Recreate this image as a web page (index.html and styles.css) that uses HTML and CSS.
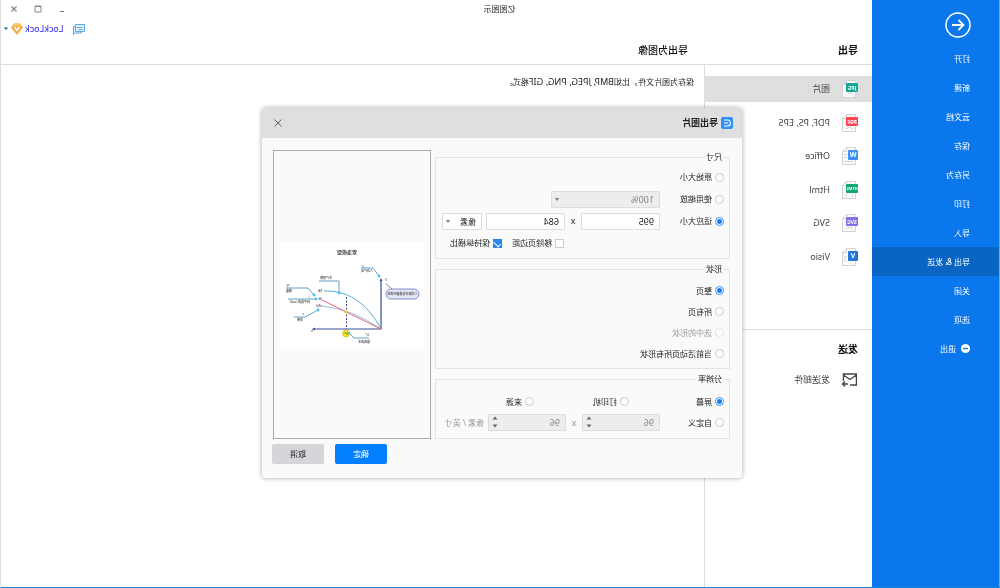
FILE: index.html
```html
<!DOCTYPE html>
<html lang="zh-CN">
<head>
<meta charset="utf-8">
<title>亿图图示</title>
<link rel="stylesheet" href="styles.css">
</head>
<body>
<div class="window">
  <nav class="sidebar">
    <button class="back" type="button" aria-label="返回">
      <svg width="26" height="26" viewBox="0 0 26 26" fill="none" stroke="#fff" stroke-width="1.5"><circle cx="13" cy="13" r="12"/><path d="M19 13H8M12.500 8 7.500 13l5 5" stroke-width="1.800"/></svg>
    </button>
    <a class="nav-item" href="#">打开</a>
    <a class="nav-item" href="#">新建</a>
    <a class="nav-item" href="#">云文档</a>
    <a class="nav-item" href="#">保存</a>
    <a class="nav-item" href="#">另存为</a>
    <a class="nav-item" href="#">打印</a>
    <a class="nav-item" href="#">导入</a>
    <a class="nav-item active" href="#"><span>导出 <span class="latin">&amp;</span> 发送</span></a>
    <a class="nav-item" href="#">关闭</a>
    <a class="nav-item" href="#">选项</a>
    <a class="nav-item" href="#"><svg width="9" height="9" viewBox="0 0 9 9"><circle cx="4.500" cy="4.500" r="4.500" fill="#fff"/><path d="M2 4.500h5" stroke="#0a78ec" stroke-width="1.400"/></svg>退出</a>
  </nav>

  <div class="workspace">
    <header class="top">
      <div class="title-bar">
        <span class="app-title">亿图图示</span>
        <div class="controls">
          <button type="button" aria-label="最小化"><svg width="8" height="8" viewBox="0 0 8 8"><path d="M2 6.500h4" stroke="#777"/></svg></button>
          <button type="button" aria-label="最大化"><svg width="8" height="8" viewBox="0 0 8 8"><path d="M1 1h6v6H1zM1 1.500h6" fill="none" stroke="#888"/></svg></button>
          <button type="button" aria-label="关闭"><svg width="8" height="8" viewBox="0 0 8 8"><path d="M1.500 1.500l5 5M6.500 1.500l-5 5" stroke="#888" stroke-width="1.300"/></svg></button>
        </div>
      </div>
      <div class="account">
        <svg width="12" height="11" viewBox="0 0 12 11" fill="#e2f1fd" stroke="#58a8ea"><path d="M3.500 2.500h8v8l-2-1.500h-6z"/><path d="M.500.500h9v7h-9z"/><path d="M3 3.500h5M2.500 5.500h4"/></svg>
        <a class="user" href="#">LockLock</a>
        <svg width="12" height="12" viewBox="0 0 12 12"><path d="M3 .500h6L12 4.500 6 12 0 4.500z" fill="#f5ac3c"/><path d="M3 .500h6L10 3H2z" fill="#fbc566"/><path d="M3.500 4 6 7.500 8.500 4" fill="none" stroke="#fff" stroke-width="1.500"/></svg>
        <svg width="6" height="4" viewBox="0 0 6 4"><path d="M1 .500h4L3 3z" fill="#1762b5"/></svg>
      </div>
      <div class="headings">
        <h2>导出</h2>
        <h1>导出为图像</h1>
      </div>
    </header>

    <div class="content">
      <aside class="pane">
        <div class="formats">
          <a class="format selected" href="#"><svg width="17" height="18" viewBox="0 0 17 18"><path class="page" d="M2.500.500h9l4 4v13h-13zM11.500.500v4h4M5 15l3-3 2 2"/><rect y="3" width="12" height="9" rx="1" fill="#14a897"/><text class="tag" x="6" y="9.500">JPG</text></svg>图片</a>
          <a class="format" href="#"><svg width="17" height="18" viewBox="0 0 17 18"><path class="page" d="M2.500.500h9l4 4v13h-13zM11.500.500v4h4M5 15l4-2 3 2"/><rect y="3" width="12" height="9" rx="1" fill="#fb4754"/><text class="tag" x="6" y="9.500">PDF</text></svg>PDF, PS, EPS</a>
          <a class="format" href="#"><svg width="17" height="18" viewBox="0 0 17 18"><path class="page" d="M2.500.500h9l4 4v13h-13zM11.500.500v4h4M11 7.500h3M11 10.500h3M5 14.500h9"/><rect y="3" width="10" height="10" rx="1" fill="#3c92f8"/><text class="tag big" x="5" y="10">W</text></svg>Office</a>
          <a class="format" href="#"><svg width="17" height="18" viewBox="0 0 17 18"><path class="page" d="M2.500.500h9l4 4v13h-13zM11.500.500v4h4M6 13l-1 1.500 1 1.500M11 13l1 1.500-1 1.500"/><rect y="3" width="12" height="9" rx="1" fill="#13a574"/><text class="tag small" x="6" y="9">HTML</text></svg>Html</a>
          <a class="format" href="#"><svg width="17" height="18" viewBox="0 0 17 18"><path class="page" d="M2.500.500h9l4 4v13h-13zM11.500.500v4h4M5 15q4-4 7 0"/><rect y="3" width="12" height="9" rx="1" fill="#846ee6"/><text class="tag" x="6" y="9.500">SVG</text></svg>SVG</a>
          <a class="format" href="#"><svg width="17" height="18" viewBox="0 0 17 18"><path class="page" d="M2.500.500h9l4 4v13h-13zM11.500.500v4h4M11 8.500h2v5"/><rect y="3" width="10" height="10" rx="1" fill="#2775dc"/><text class="tag big" x="5" y="10">V</text></svg>Visio</a>
        </div>
        <section class="send">
          <h2>发送</h2>
          <a class="format" href="#"><svg width="17" height="14" viewBox="0 0 17 14" fill="none" stroke="#444" stroke-width="1.300"><path d="M8 12H1.600V1h13v7M1.600 2 8 6.500 14.600 2M10 11h5M13 8.500l2.500 2.500-2.500 2.500"/></svg>发送邮件</a>
        </section>
      </aside>
      <main class="detail"><p>保存为图片文件，比如<span class="latin">BMP, JPEG, PNG, GIF</span>格式。</p></main>
    </div>
  </div>

  <div class="overlay">
    <form class="dialog" role="dialog" aria-label="导出图片">
      <div class="dialog-head">
        <svg width="12" height="12" viewBox="0 0 12 12"><rect width="12" height="12" rx="2" fill="#2e91fb"/><path d="M9 3H5.500a3 3 0 0 0 0 6H9M5 6h4" fill="none" stroke="#fff" stroke-width="1.200"/></svg>
        <strong>导出图片</strong>
        <button class="close" type="button" aria-label="关闭"><svg width="10" height="10" viewBox="0 0 10 10"><path d="M1.500 1.500l7 7M8.500 1.500l-7 7" stroke="#666"/></svg></button>
      </div>
      <div class="dialog-body">
        <div class="groups">
          <fieldset class="size">
            <legend>尺寸</legend>
            <div class="row"><label class="opt"><input type="radio" name="size">原始大小</label></div>
            <div class="row"><label class="opt"><input type="radio" name="size">使用缩放</label>
              <span class="pick scale"><select aria-label="缩放" disabled><option>100%</option></select></span></div>
            <div class="row"><label class="opt"><input type="radio" name="size" checked>适应大小</label>
              <input class="field" type="text" value="995" aria-label="宽"><span class="times">x</span><input class="field" type="text" value="684" aria-label="高">
              <span class="pick unit"><select aria-label="单位"><option>像素</option></select></span></div>
            <div class="row checks"><label class="opt"><input type="checkbox">移除页边距</label><label class="opt"><input type="checkbox" checked>保持纵横比</label></div>
          </fieldset>
          <fieldset class="shape">
            <legend>形状</legend>
            <div class="row"><label class="opt"><input type="radio" name="shape" checked>整页</label></div>
            <div class="row"><label class="opt"><input type="radio" name="shape">所有页</label></div>
            <div class="row"><label class="opt off"><input type="radio" name="shape" disabled>选中的形状</label></div>
            <div class="row"><label class="opt"><input type="radio" name="shape">当前活动页所有形状</label></div>
          </fieldset>
          <fieldset class="dpi">
            <legend>分辨率</legend>
            <div class="row thirds"><label class="opt"><input type="radio" name="dpi" checked>屏幕</label><label class="opt"><input type="radio" name="dpi">打印机</label><label class="opt"><input type="radio" name="dpi">来源</label></div>
            <div class="row off"><label class="opt custom"><input type="radio" name="dpi">自定义</label>
              <span class="spin"><input class="field" type="text" value="96" aria-label="水平分辨率" disabled><svg width="6" height="12" viewBox="0 0 6 12"><path d="M.500 3.500 3 .500l2.500 3zM.500 8.500l2.500 3 2.500-3z" fill="#666"/></svg></span><span class="times">x</span><span class="spin"><input class="field" type="text" value="96" aria-label="垂直分辨率" disabled><svg width="6" height="12" viewBox="0 0 6 12"><path d="M.500 3.500 3 .500l2.500 3zM.500 8.500l2.500 3 2.500-3z" fill="#666"/></svg></span>
              <span class="per">像素 / 英寸</span></div>
          </fieldset>
        </div>
        <div class="preview">
          <svg class="chart" viewBox="0 0 144 107">
            <text class="chart-title" x="77" y="12">索洛模型</text>
            <g fill="none">
              <path d="M43 38V87H110" stroke="#3c4a9b" stroke-width="1.200"/>
              <path d="M43 87C54 66 72 48 100 49" stroke="#5aa9d6"/>
              <path d="M43 87Q72 67 102 64" stroke="#7fb2dc" stroke-width=".8"/>
              <path d="M43 87 102 58" stroke="#ee5567" stroke-width=".9"/>
              <path d="M77.500 55V87" stroke="#3c4a9b" stroke-dasharray="2 1.500"/>
              <path d="M63 26H51L45 34M105 39H85V51M138 46H116L110 53M136 57H108M130 75H119L106 68M75 91 70 96H55" stroke="#3f88b4" stroke-width=".8"/>
              <path d="M38 42 32 47" stroke="#3c4a9b" stroke-width=".7"/>
            </g>
            <rect x="5" y="47" width="33" height="10" rx="5" fill="#e3e6f7" stroke="#6674bd" stroke-width=".8"/>
            <path d="M43 36l-1.500 3h3zM112 87l-3-1.500v3z" fill="#3c4a9b"/>
            <g fill="#40c4f2"><circle cx="45" cy="34" r="1.400"/><circle cx="85" cy="51" r="1.400"/><circle cx="110" cy="53" r="1.400"/><circle cx="108" cy="57" r="1.400"/><circle cx="106" cy="68" r="1.400"/></g>
            <circle cx="78" cy="70" r="1.600" fill="#e5cf35"/>
            <circle cx="78" cy="91.500" r="3.500" fill="#fbe80a" stroke="#a59d29" stroke-width=".5"/>
            <circle cx="75" cy="91" r="1.200" fill="#40c4f2"/>
            <g class="notes">
              <text x="21.500" y="53">人均资本存量稳定状态</text>
              <text x="61" y="25">y</text><text x="57" y="30">人均产出</text>
              <text x="98" y="37">生产函数</text>
              <text x="136" y="44">sy</text><text x="135" y="50">储蓄</text>
              <text x="115" y="56">i</text><text x="124" y="61">持平投资 (n+δ)</text>
              <text x="121" y="73">c</text><text x="124" y="79">消费</text>
              <text x="57" y="94">k*</text><text x="60" y="101">稳态资本</text>
              <text x="104" y="50">f(k)</text><text x="104" y="58">δk</text><text x="105" y="65">sf(k)</text>
              <text x="112" y="90">k</text><text x="38" y="38">y</text><text x="78" y="92.500">k*</text>
            </g>
          </svg>
        </div>
      </div>
      <div class="actions"><button class="btn primary" type="button">确定</button><button class="btn" type="button">取消</button></div>
    </form>
  </div>
</div>
</body>
</html>
```

FILE: styles.css
```css
* { box-sizing: border-box; }

body {
  margin: 0;
  background: #fff;
  color: #222;
  font: 8px/10px "Noto Sans", "Noto Sans CJK SC", sans-serif;
}

a { color: inherit; text-decoration: none; }
h1, h2, p { margin: 0; }
svg { display: block; flex: none; }

button {
  border: 0;
  padding: 0;
  background: none;
  color: inherit;
  font: inherit;
}

/* The whole interface is shown flipped left to right. */
.window {
  position: relative;
  display: flex;
  min-height: 100vh;
  border-right: 1px solid #ddd;
  border-bottom: 1px solid #1583dc;
  transform: scaleX(-1);
}

.latin { font-size: 9px; }

/* Sidebar */
.sidebar {
  width: 128px;
  flex: none;
  border-left: 1px solid #68abf3;
  background: #0a78ec;
  color: #fff;
}

.back { display: block; margin: 12px 0 6px 28px; }

.nav-item {
  display: flex;
  align-items: center;
  gap: 5px;
  height: 29px;
  padding-left: 29px;
}

.nav-item.active { background: #0865c4; }

/* Header */
.workspace { flex: 1; display: flex; flex-direction: column; }

.top { height: 65px; border-bottom: 1px solid #ddd; }

.title-bar {
  display: grid;
  grid-template-columns: 1fr auto;
  align-items: center;
  height: 18px;
  padding-right: 9px;
}

.app-title { justify-self: center; margin-right: 61px; }
.controls { display: flex; gap: 16px; }

.account {
  display: flex;
  justify-content: flex-end;
  align-items: center;
  gap: 2px;
  height: 22px;
  padding-right: 2px;
}

.user {
  margin-left: 7px;
  color: #2a1ee6;
  font-size: 9px;
}

.headings {
  display: grid;
  grid-template-columns: 170px 1fr;
  padding: 4px 0 0 14px;
}

h1, h2 { font-size: 10px; line-height: 12px; font-weight: 700; color: #111; }
h1 { font-weight: 500; }

/* Export formats */
.content { flex: 1; display: flex; }

.pane {
  width: 168px;
  flex: none;
  padding-top: 11px;
  border-right: 1px solid #ddd;
}

.formats {
  display: flex;
  flex-direction: column;
  justify-content: space-between;
  height: 194px;
}

.format {
  display: flex;
  align-items: center;
  gap: 11px;
  height: 26px;
  padding-left: 14px;
  color: #444;
  font-size: 9px;
}

.format.selected { background: #dfdfdf; }
.page { fill: #fafafa; stroke: #d2d2d2; }

.tag {
  fill: #fff;
  font-size: 5px;
  font-weight: 700;
  text-anchor: middle;
}

.tag.big { font-size: 7px; }
.tag.small { font-size: 4px; }

.send { margin-top: 59px; padding-top: 13px; border-top: 1px solid #ddd; }
.send h2 { padding-left: 14px; }
.send .format { margin-top: 12px; }
.detail { padding: 12px 10px; }

/* Dialog */
.overlay {
  position: absolute;
  inset: 0;
  display: grid;
  place-items: center;
  padding: 0 3px 1px 0;
}

.dialog {
  width: 480px;
  border-radius: 4px;
  background: #fafafa;
  box-shadow: 0 0 5px rgba(0, 0, 0, .35);
}

.dialog-head {
  display: flex;
  align-items: center;
  gap: 3px;
  height: 30px;
  padding: 0 11px 0 9px;
  border-radius: 4px 4px 0 0;
  background: #dfdfdf;
  font-size: 9px;
}

.close { margin-left: auto; }

.dialog-body {
  display: grid;
  grid-template-columns: 295px 1fr;
  gap: 4px;
  padding: 12px 11px 0 12px;
}

.groups { display: grid; gap: 5px; padding-top: 2px; }

fieldset {
  min-width: 0;
  margin: 0;
  padding: 4px 5px;
  border: 1px solid #e3e3e3;
}

fieldset.shape { padding: 6px 5px 4px; }
fieldset.dpi { padding: 7px 5px 5px; }
legend { height: 10px; padding: 0 2px; }

.row { display: flex; align-items: center; height: 21px; }
.size .row { height: 22px; }
.row > .opt:first-child { min-width: 64px; }
.row.checks { padding-left: 160px; gap: 10px; }
.row.checks > .opt:first-child { min-width: 0; }
.row.thirds { display: grid; grid-template-columns: repeat(3, 95px); }
.opt { display: flex; align-items: center; gap: 3px; white-space: nowrap; }
.off { color: #999; }
.custom { color: #222; }

input[type="radio"], input[type="checkbox"] {
  appearance: none;
  flex: none;
  width: 9px;
  height: 9px;
  margin: 0;
  border: 1px solid #ccc;
  background: #fff;
}

input[type="radio"] { border-radius: 50%; }

input[type="radio"]:checked {
  border-color: #3a93f5;
  background: radial-gradient(circle, #1a7df0 2px, #fff 3px);
}

input[type="radio"]:disabled { border-color: #e2e2e2; }

input[type="checkbox"]:checked {
  display: grid;
  place-items: center;
  border-color: #2588ee;
  background: #2588ee;
}

input[type="checkbox"]:checked::after {
  content: "";
  width: 3px;
  height: 6px;
  border: solid #fff;
  border-width: 0 1px 1px 0;
  transform: rotate(45deg);
}

.field, select {
  width: 79px;
  height: 17px;
  margin: 0;
  padding: 0 5px;
  border: 1px solid #ddd;
  border-radius: 1px;
  background: #fff;
  color: #222;
  font: 9px/15px "Noto Sans", "Noto Sans CJK SC", sans-serif;
}

.field:disabled, select:disabled { background: #ededed; color: #888; opacity: 1; }
.times { width: 16px; text-align: center; font-size: 9px; }

.pick { position: relative; display: flex; }
.pick select { width: 100%; appearance: none; }
.pick.scale { width: 109px; }
.pick.unit { width: 40px; margin-left: 4px; }
.pick.unit select { font-size: 8px; }

.pick::after {
  content: "";
  position: absolute;
  top: 7px;
  right: 4px;
  border: 2px solid transparent;
  border-top: 3px solid #777;
}

.spin { position: relative; display: flex; }
.spin svg { position: absolute; top: 2px; right: 4px; }
.spin .field { width: 78px; }
.per { margin-left: 4px; white-space: nowrap; }

/* Preview */
.preview {
  display: grid;
  align-items: center;
  padding: 2px 6px 0;
  border: 1px solid #aaa;
}

.chart { width: 100%; background: #fff; }
.chart-title { font-size: 5px; font-weight: 500; text-anchor: middle; fill: #222; }
.notes { font-size: 3px; text-anchor: middle; font-weight: 500; fill: #333; }

.actions {
  display: flex;
  justify-content: flex-end;
  gap: 11px;
  padding: 5px 10px 14px;
}

.btn { width: 52px; height: 20px; border-radius: 2px; background: #d4d6da; }
.btn.primary { background: #027fff; color: #fff; }
```
